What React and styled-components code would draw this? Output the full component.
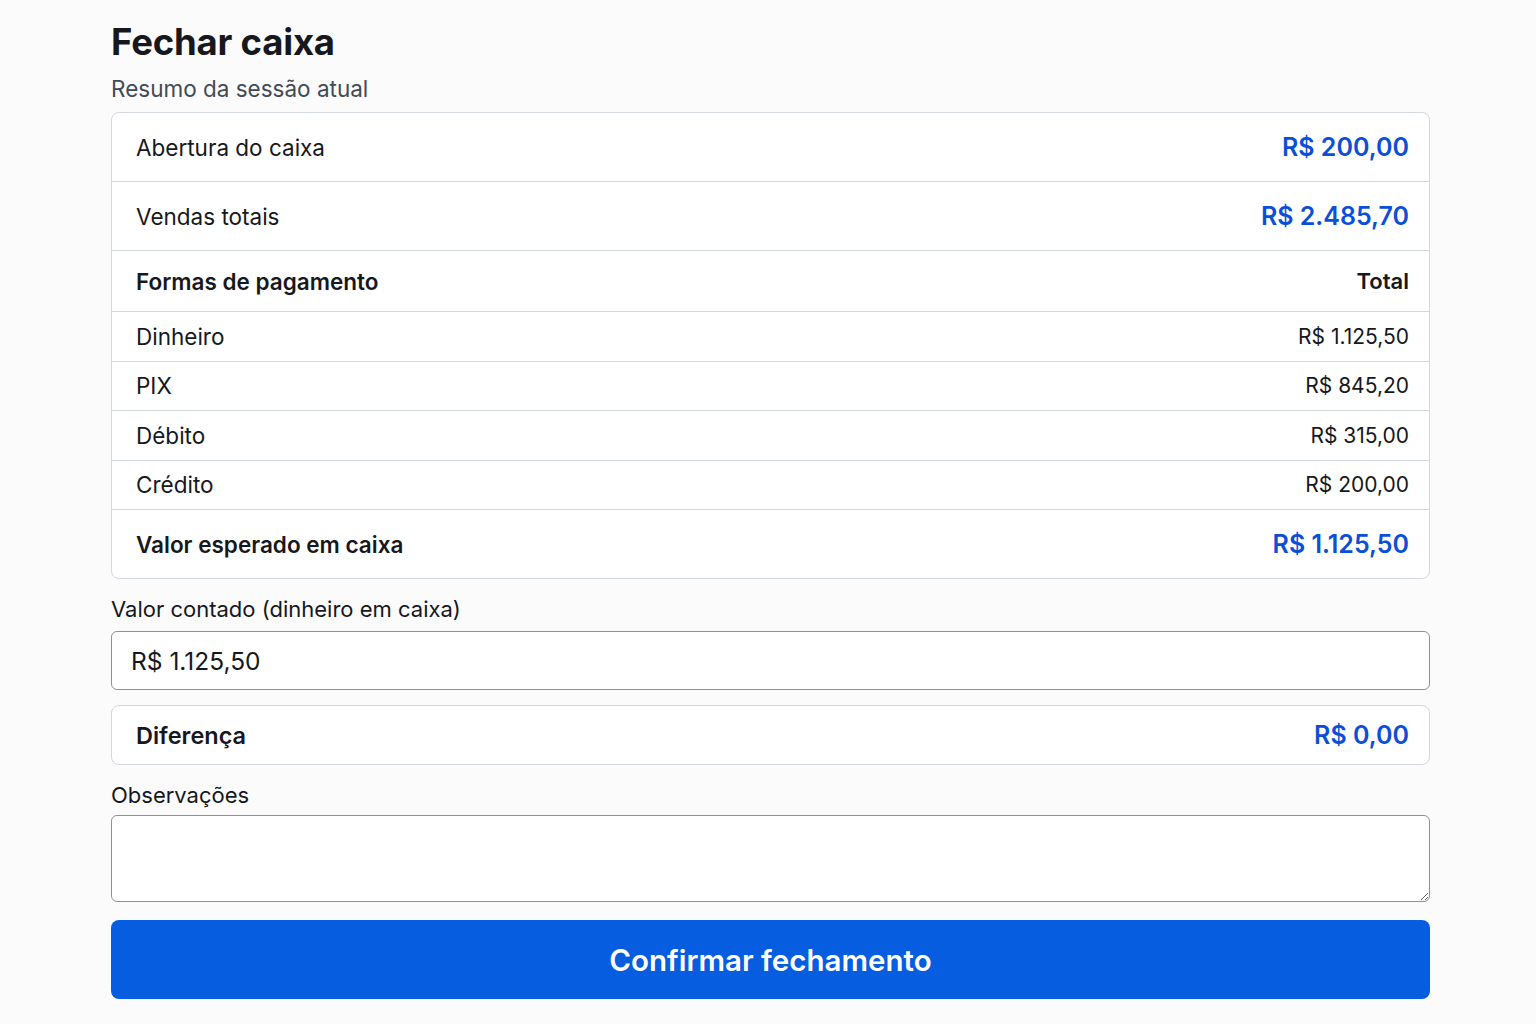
import React from "react";
import styled, { createGlobalStyle } from "styled-components";

const Global = createGlobalStyle`
  * { box-sizing: border-box; }
  html, body { margin: 0; padding: 0; background: #fbfbfb; }
  body { font-family: Inter, "Noto Sans", "Liberation Sans", sans-serif; color: #16181d; }
`;

const Page = styled.main`
  width: 1319px;
  margin-left: 111px;
  padding-top: 20px;
  display: flex;
  flex-direction: column;
`;

const Title = styled.h1`
  margin: 0;
  font-size: 36.5px;
  line-height: 44px;
  font-weight: 700;
  color: #16181d;
  letter-spacing: -0.2px;
`;

const Subtitle = styled.p`
  margin: 9px 0 0;
  font-size: 22.5px;
  line-height: 31px;
  color: #434a56;
`;

const Card = styled.section`
  margin-top: 8px;
  background: #fff;
  border: 1px solid #d3d7de;
  border-radius: 8px;
  overflow: hidden;
`;

const Row = styled.div`
  display: flex;
  align-items: center;
  justify-content: space-between;
  height: ${(p) => p.$h}px;
  padding: 0 20px 0 24px;
  border-top: ${(p) => (p.$first ? "none" : "1px solid #d3d7de")};
`;

const Label = styled.span`
  font-size: ${(p) => p.$size || 22.5}px;
  font-weight: ${(p) => (p.$bold ? 600 : 400)};
  color: #16181d;
`;

const Value = styled.span`
  font-size: ${(p) => p.$size || (p.$accent ? 25 : 21)}px;
  font-weight: ${(p) => (p.$accent || p.$bold ? 600 : 400)};
  color: ${(p) => (p.$accent ? "#0b4fd8" : "#16181d")};
`;

const FieldLabel = styled.label`
  display: block;
  margin-top: ${(p) => p.$mt}px;
  font-size: 22px;
  line-height: 31px;
  color: #16181d;
`;

const Input = styled.input`
  margin-top: 6px;
  width: 100%;
  height: 59px;
  padding: 0 19px;
  font-family: inherit;
  font-size: 24.5px;
  color: #16181d;
  background: #fff;
  border: 1px solid #8c909b;
  border-radius: 6px;
  outline: none;
`;

const DiffBox = styled.div`
  margin-top: 15px;
  height: 60px;
  display: flex;
  align-items: center;
  justify-content: space-between;
  padding: 0 20px 0 24px;
  background: #fff;
  border: 1px solid #d3d7de;
  border-radius: 8px;
`;

const TextArea = styled.textarea`
  margin-top: 4px;
  width: 100%;
  height: 87px;
  padding: 12px 19px;
  font-family: inherit;
  font-size: 22px;
  background: #fff;
  border: 1px solid #8c909b;
  border-radius: 6px;
  resize: vertical;
  outline: none;
  display: block;
`;

const Button = styled.button`
  margin-top: 18px;
  height: 79px;
  width: 100%;
  border: none;
  border-radius: 8px;
  background: #065ddf;
  color: #fff;
  font-family: inherit;
  font-size: 29.5px;
  font-weight: 600;
  cursor: pointer;
`;

const payments = [
  ["Dinheiro", "R$ 1.125,50"],
  ["PIX", "R$ 845,20"],
  ["Débito", "R$ 315,00"],
  ["Crédito", "R$ 200,00"],
];

export default function App() {
  return (
    <>
      <Global />
      <Page>
        <Title>Fechar caixa</Title>
        <Subtitle>Resumo da sessão atual</Subtitle>
        <Card>
          <Row $h={68} $first>
            <Label>Abertura do caixa</Label>
            <Value $accent>R$ 200,00</Value>
          </Row>
          <Row $h={69}>
            <Label>Vendas totais</Label>
            <Value $accent>R$ 2.485,70</Value>
          </Row>
          <Row $h={61}>
            <Label $bold>Formas de pagamento</Label>
            <Value $bold $size={22}>Total</Value>
          </Row>
          {payments.map(([k, v]) => (
            <Row key={k} $h={49.5}>
              <Label>{k}</Label>
              <Value>{v}</Value>
            </Row>
          ))}
          <Row $h={69}>
            <Label $bold>Valor esperado em caixa</Label>
            <Value $accent>R$ 1.125,50</Value>
          </Row>
        </Card>
        <FieldLabel $mt={15}>Valor contado (dinheiro em caixa)</FieldLabel>
        <Input defaultValue="R$ 1.125,50" />
        <DiffBox>
          <Label $bold $size={23.5}>Diferença</Label>
          <Value $accent>R$ 0,00</Value>
        </DiffBox>
        <FieldLabel $mt={15}>Observações</FieldLabel>
        <TextArea />
        <Button>Confirmar fechamento</Button>
      </Page>
    </>
  );
}
